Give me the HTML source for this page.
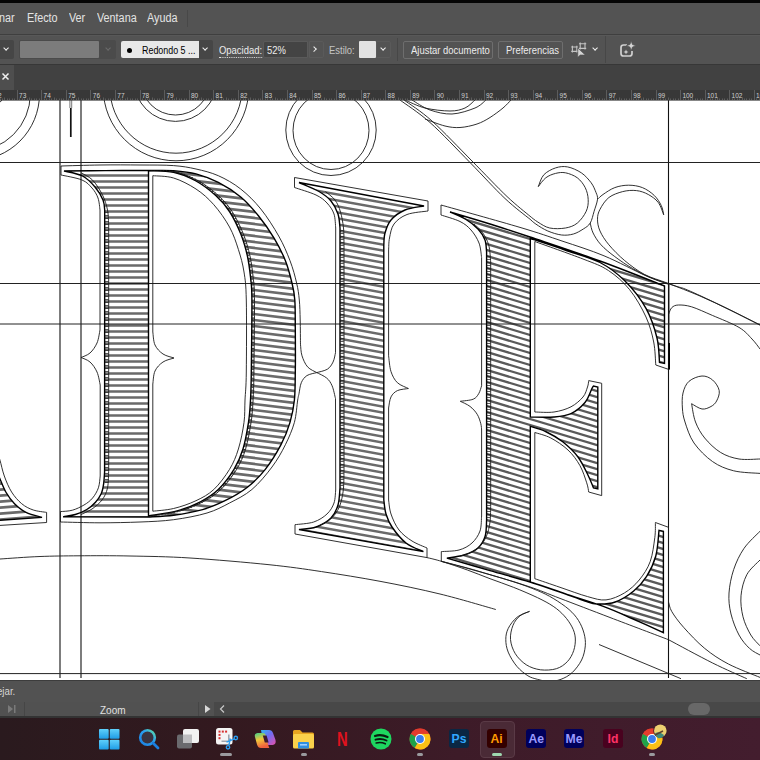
<!DOCTYPE html>
<html lang="es"><head><meta charset="utf-8"><title>Illustrator</title>
<style>
html,body{margin:0;padding:0;background:#535353;}
body{width:760px;height:760px;overflow:hidden;position:relative;font-family:"Liberation Sans",sans-serif;}
.a{position:absolute;}
.t{position:absolute;white-space:nowrap;line-height:1;}
.menu{font-size:12px;color:#e4e4e4;top:12.3px;transform:scaleX(0.9);transform-origin:0 0;}
.ctl{font-size:10.5px;color:#ececec;top:45.4px;transform:scaleX(0.9);transform-origin:0 0;}
.chev{position:absolute;margin:0.750px;width:3.200px;height:3.200px;border-right:1.900px solid #f0f0f0;border-bottom:1.900px solid #f0f0f0;transform:rotate(45deg);}
.btn{position:absolute;top:41px;height:16px;border:1px solid #6e6e6e;border-radius:2px;box-sizing:content-box;}
.tb{position:absolute;top:719px;}
</style></head><body>
<!-- top black strip -->
<div class="a" style="left:0;top:0;width:760px;height:3.5px;background:#050505"></div>
<!-- menu bar -->
<div class="a" style="left:0;top:3px;width:760px;height:30px;background:#535353"></div>
<div class="t menu" style="left:-1px">nar</div>
<div class="t menu" style="left:27px">Efecto</div>
<div class="t menu" style="left:69px">Ver</div>
<div class="t menu" style="left:97px">Ventana</div>
<div class="t menu" style="left:147px">Ayuda</div>
<div class="a" style="left:187px;top:10px;width:1px;height:17px;background:#484848"></div>
<!-- control bar -->
<div class="a" style="left:0;top:34px;width:760px;height:30px;background:#535353"></div>
<div class="a" style="left:0;top:33.800px;width:760px;height:1.100px;background:#3f3f3f"></div>
<div class="a" style="left:0;top:34.900px;width:760px;height:0.800px;background:#585858"></div>
<div class="a" style="left:0;top:40px;width:14px;height:19px;background:#464646;border-radius:0 2px 2px 0"></div>
<div class="chev" style="left:3px;top:45px"></div>
<div class="a" style="left:19px;top:40px;width:97px;height:19px;background:#4b4b4b;border-radius:2px"></div>
<div class="a" style="left:20px;top:41px;width:79px;height:17px;background:#7c7c7c;border-radius:1px"></div>
<div class="chev" style="left:105px;top:45px;border-color:#6b6b6b"></div>
<div class="a" style="left:121px;top:41px;width:78px;height:17px;background:#e8e8e8;border-radius:2px 0 0 2px"></div>
<div class="a" style="left:126.5px;top:47.5px;width:5px;height:5px;border-radius:50%;background:#000"></div>
<div class="t" style="left:142px;top:45.6px;font-size:10px;color:#000;transform:scaleX(0.89);transform-origin:0 0">Redondo 5 ...</div>
<div class="a" style="left:199px;top:40px;width:14px;height:19px;background:#464646;border-radius:0 2px 2px 0"></div>
<div class="chev" style="left:202.5px;top:45px"></div>
<div class="t ctl" style="left:219px;border-bottom:1px dotted #ddd;padding-bottom:1px;font-size:10.5px">Opacidad:</div>
<div class="a" style="left:263px;top:41px;width:45px;height:17px;background:#444;border:1px solid #5a5a5a;border-radius:2px 0 0 2px;box-sizing:border-box"></div>
<div class="t ctl" style="left:267px">52%</div>
<div class="a" style="left:309px;top:41px;width:15px;height:17px;border:1px solid #5a5a5a;box-sizing:border-box;border-radius:0 2px 2px 0"></div>
<div class="chev" style="left:311.5px;top:46.5px;transform:rotate(-45deg)"></div>
<div class="t ctl" style="left:329px;color:#c4c4c4">Estilo:</div>
<div class="a" style="left:359px;top:41px;width:16.500px;height:17px;background:#e2e2e2;border-radius:1px"></div>
<div class="a" style="left:376px;top:41px;width:15px;height:17px;border:1px solid #5a5a5a;box-sizing:border-box;border-radius:0 2px 2px 0"></div>
<div class="chev" style="left:380px;top:45px"></div>
<div class="a" style="left:397px;top:38px;width:1px;height:23px;background:#474747"></div>
<div class="btn" style="left:403px;width:88px"></div>
<div class="t ctl" style="left:411px">Ajustar documento</div>
<div class="btn" style="left:498px;width:63px"></div>
<div class="t ctl" style="left:506px">Preferencias</div>
<!-- selection icon -->
<svg class="a" style="left:570px;top:40px" width="20" height="20" viewBox="0 0 20 20"><g fill="none" stroke="#c4c4c4" stroke-width="1.100"><path d="M1.200 7H7.800M1.200 11.400H7.800M2.400 5.800V12.600M6.800 5.800V12.600"/><path d="M9 3.800H16.200M9 8.400H16.200M10.200 2.600V9.600M15 2.600V9.600"/></g><path d="M7.800 8L7.800 17.300L10.200 15L15.200 15Z" fill="#d4d4d4" stroke="#535353" stroke-width="0.600"/></svg>
<div class="chev" style="left:592px;top:45px"></div>
<div class="a" style="left:605px;top:36px;width:1px;height:27px;background:#474747"></div>
<svg class="a" style="left:618px;top:40px" width="20" height="20" viewBox="0 0 20 20"><path d="M9 5H5.5Q3 5 3 7.5V13.5Q3 16 5.5 16H11.500Q14 16 14 13.500V11" fill="none" stroke="#d0d0d0" stroke-width="1.7"/><path d="M13.200 0.800L14.500 4.500L18.200 5.800L14.500 7.100L13.200 10.800L11.900 7.100L8.200 5.800L11.900 4.500Z" fill="#d4d4d4" stroke="#535353" stroke-width="0.800"/><path d="M8 9.500L8.700 11.300L10.500 12L8.700 12.700L8 14.500L7.300 12.700L5.500 12L7.300 11.300Z" fill="#d0d0d0"/></svg>
<div class="a" style="left:0;top:63.800px;width:760px;height:1.500px;background:#373737"></div>
<!-- tab bar -->
<div class="a" style="left:0;top:65px;width:760px;height:25px;background:#414141"></div>
<div class="a" style="left:0;top:65px;width:14px;height:25px;background:#4e4e4e"></div>
<svg class="a" style="left:1px;top:72px" width="10" height="10" viewBox="0 0 10 10"><path d="M1.500 1.500L7.500 7.500M7.500 1.500L1.500 7.500" stroke="#f0f0f0" stroke-width="1.5"/></svg>
<svg width="760" height="11" viewBox="0 90 760 11" style="position:absolute;left:0;top:90px"><rect x="0" y="90" width="760" height="11" fill="#383838"/><path d="M-7.5 90V100M-4.5 98.5V100M-2.5 98.5V100M0.5 98.5V100M2.5 98.5V100M4.5 97.5V100M7.5 98.5V100M9.5 98.5V100M12.5 98.5V100M14.5 98.5V100M17.5 90V100M19.5 98.5V100M22.5 98.5V100M24.5 98.5V100M27.5 98.5V100M29.5 97.5V100M31.5 98.5V100M34.5 98.5V100M36.5 98.5V100M39.5 98.5V100M41.5 90V100M44.5 98.5V100M46.5 98.5V100M49.5 98.5V100M51.5 98.5V100M54.5 97.5V100M56.5 98.5V100M59.5 98.5V100M61.5 98.5V100M63.5 98.5V100M66.5 90V100M68.5 98.5V100M71.5 98.5V100M73.5 98.5V100M76.5 98.5V100M78.5 97.5V100M81.5 98.5V100M83.5 98.5V100M86.5 98.5V100M88.5 98.5V100M90.5 90V100M93.5 98.5V100M95.5 98.5V100M98.5 98.5V100M100.5 98.5V100M103.5 97.5V100M105.5 98.5V100M108.5 98.5V100M110.5 98.5V100M113.5 98.5V100M115.5 90V100M117.5 98.5V100M120.5 98.5V100M122.5 98.5V100M125.5 98.5V100M127.5 97.5V100M130.5 98.5V100M132.5 98.5V100M135.5 98.5V100M137.5 98.5V100M140.5 90V100M142.5 98.5V100M145.5 98.5V100M147.5 98.5V100M149.5 98.5V100M152.5 97.5V100M154.5 98.5V100M157.5 98.5V100M159.5 98.5V100M162.5 98.5V100M164.5 90V100M167.5 98.5V100M169.5 98.5V100M172.5 98.5V100M174.5 98.5V100M176.5 97.5V100M179.5 98.5V100M181.5 98.5V100M184.5 98.5V100M186.5 98.5V100M189.5 90V100M191.5 98.5V100M194.5 98.5V100M196.5 98.5V100M199.5 98.5V100M201.5 97.5V100M203.5 98.5V100M206.5 98.5V100M208.5 98.5V100M211.5 98.5V100M213.5 90V100M216.5 98.5V100M218.5 98.5V100M221.5 98.5V100M223.5 98.5V100M226.5 97.5V100M228.5 98.5V100M231.5 98.5V100M233.5 98.5V100M235.5 98.5V100M238.5 90V100M240.5 98.5V100M243.5 98.5V100M245.5 98.5V100M248.5 98.5V100M250.5 97.5V100M253.5 98.5V100M255.5 98.5V100M258.5 98.5V100M260.5 98.5V100M262.5 90V100M265.5 98.5V100M267.5 98.5V100M270.5 98.5V100M272.5 98.5V100M275.5 97.5V100M277.5 98.5V100M280.5 98.5V100M282.5 98.5V100M285.5 98.5V100M287.5 90V100M289.5 98.5V100M292.5 98.5V100M294.5 98.5V100M297.5 98.5V100M299.5 97.5V100M302.5 98.5V100M304.5 98.5V100M307.5 98.5V100M309.5 98.5V100M312.5 90V100M314.5 98.5V100M317.5 98.5V100M319.5 98.5V100M321.5 98.5V100M324.5 97.5V100M326.5 98.5V100M329.5 98.5V100M331.5 98.5V100M334.5 98.5V100M336.5 90V100M339.5 98.5V100M341.5 98.5V100M344.5 98.5V100M346.5 98.5V100M348.5 97.5V100M351.5 98.5V100M353.5 98.5V100M356.5 98.5V100M358.5 98.5V100M361.5 90V100M363.5 98.5V100M366.5 98.5V100M368.5 98.5V100M371.5 98.5V100M373.5 97.5V100M375.5 98.5V100M378.5 98.5V100M380.5 98.5V100M383.5 98.5V100M385.5 90V100M388.5 98.5V100M390.5 98.5V100M393.5 98.5V100M395.5 98.5V100M398.5 97.5V100M400.5 98.5V100M402.5 98.5V100M405.5 98.5V100M407.5 98.5V100M410.5 90V100M412.5 98.5V100M415.5 98.5V100M417.5 98.5V100M420.5 98.5V100M422.5 97.5V100M425.5 98.5V100M427.5 98.5V100M430.5 98.5V100M432.5 98.5V100M434.5 90V100M437.5 98.5V100M439.5 98.5V100M442.5 98.5V100M444.5 98.5V100M447.5 97.5V100M449.5 98.5V100M452.5 98.5V100M454.5 98.5V100M457.5 98.5V100M459.5 90V100M461.5 98.5V100M464.5 98.5V100M466.5 98.5V100M469.5 98.5V100M471.5 97.5V100M474.5 98.5V100M476.5 98.5V100M479.5 98.5V100M481.5 98.5V100M484.5 90V100M486.5 98.5V100M488.5 98.5V100M491.5 98.5V100M493.5 98.5V100M496.5 97.5V100M498.5 98.5V100M501.5 98.5V100M503.5 98.5V100M506.5 98.5V100M508.5 90V100M511.5 98.5V100M513.5 98.5V100M516.5 98.5V100M518.5 98.5V100M520.5 97.5V100M523.5 98.5V100M525.5 98.5V100M528.5 98.5V100M530.5 98.5V100M533.5 90V100M535.5 98.5V100M538.5 98.5V100M540.5 98.5V100M543.5 98.5V100M545.5 97.5V100M547.5 98.5V100M550.5 98.5V100M552.5 98.5V100M555.5 98.5V100M557.5 90V100M560.5 98.5V100M562.5 98.5V100M565.5 98.5V100M567.5 98.5V100M570.5 97.5V100M572.5 98.5V100M574.5 98.5V100M577.5 98.5V100M579.5 98.5V100M582.5 90V100M584.5 98.5V100M587.5 98.5V100M589.5 98.5V100M592.5 98.5V100M594.5 97.5V100M597.5 98.5V100M599.5 98.5V100M602.5 98.5V100M604.5 98.5V100M606.5 90V100M609.5 98.5V100M611.5 98.5V100M614.5 98.5V100M616.5 98.5V100M619.5 97.5V100M621.5 98.5V100M624.5 98.5V100M626.5 98.5V100M629.5 98.5V100M631.5 90V100M633.5 98.5V100M636.5 98.5V100M638.5 98.5V100M641.5 98.5V100M643.5 97.5V100M646.5 98.5V100M648.5 98.5V100M651.5 98.5V100M653.5 98.5V100M656.5 90V100M658.5 98.5V100M660.5 98.5V100M663.5 98.5V100M665.5 98.5V100M668.5 97.5V100M670.5 98.5V100M673.5 98.5V100M675.5 98.5V100M678.5 98.5V100M680.5 90V100M683.5 98.5V100M685.5 98.5V100M688.5 98.5V100M690.5 98.5V100M692.5 97.5V100M695.5 98.5V100M697.5 98.5V100M700.5 98.5V100M702.5 98.5V100M705.5 90V100M707.5 98.5V100M710.5 98.5V100M712.5 98.5V100M715.5 98.5V100M717.5 97.5V100M719.5 98.5V100M722.5 98.5V100M724.5 98.5V100M727.5 98.5V100M729.5 90V100M732.5 98.5V100M734.5 98.5V100M737.5 98.5V100M739.5 98.5V100M742.5 97.5V100M744.5 98.5V100M746.5 98.5V100M749.5 98.5V100M751.5 98.5V100M754.5 90V100M756.5 98.5V100M759.5 98.5V100M761.5 98.5V100M764.5 98.5V100M766.5 97.5V100M769.5 98.5V100M771.5 98.5V100M774.5 98.5V100M776.5 98.5V100M778.5 90V100M781.5 98.5V100M783.5 98.5V100M786.5 98.5V100M788.5 98.5V100M791.5 97.5V100M793.5 98.5V100M796.5 98.5V100M798.5 98.5V100M801.5 98.5V100" stroke="#7a7a7a" stroke-width="1" opacity="0.55"/><g font-family="Liberation Sans, sans-serif" font-size="6.5" fill="#cfcfcf"><text x="-5.5" y="98">72</text><text x="19.1" y="98">73</text><text x="43.6" y="98">74</text><text x="68.2" y="98">75</text><text x="92.8" y="98">76</text><text x="117.3" y="98">77</text><text x="141.9" y="98">78</text><text x="166.5" y="98">79</text><text x="191.0" y="98">80</text><text x="215.6" y="98">81</text><text x="240.2" y="98">82</text><text x="264.8" y="98">83</text><text x="289.3" y="98">84</text><text x="313.9" y="98">85</text><text x="338.5" y="98">86</text><text x="363.0" y="98">87</text><text x="387.6" y="98">88</text><text x="412.2" y="98">89</text><text x="436.7" y="98">90</text><text x="461.3" y="98">91</text><text x="485.9" y="98">92</text><text x="510.4" y="98">93</text><text x="535.0" y="98">94</text><text x="559.6" y="98">95</text><text x="584.2" y="98">96</text><text x="608.7" y="98">97</text><text x="633.3" y="98">98</text><text x="657.9" y="98">99</text><text x="682.4" y="98">100</text><text x="707.0" y="98">101</text><text x="731.6" y="98">102</text><text x="756.1" y="98">103</text><text x="780.7" y="98">104</text></g></svg><svg width="760" height="580" viewBox="0 100 760 580" style="position:absolute;left:0;top:100px"><defs><clipPath id="cDs"><rect x="104" y="160" width="45" height="360"/></clipPath><clipPath id="cD"><path clip-rule="evenodd" d="M64.0 171.0C70.8 170.9 90.8 170.7 105.0 170.6C119.2 170.5 137.6 170.5 149.0 170.5C160.4 170.5 165.8 170.1 173.6 170.7C181.4 171.3 188.6 171.9 196.0 173.9C203.4 175.9 210.9 178.6 218.3 182.4C225.8 186.2 234.0 191.4 240.7 197.0C247.4 202.6 253.0 209.1 258.6 216.0C264.2 222.9 269.7 230.9 274.2 238.3C278.7 245.8 282.4 253.2 285.4 260.7C288.4 268.1 290.4 276.4 292.0 283.0C293.6 289.6 294.2 292.2 294.8 300.0C295.4 307.8 295.2 318.0 295.3 330.0C295.4 342.0 295.5 360.3 295.3 372.0C295.1 383.7 295.3 391.6 294.4 400.0C293.5 408.4 292.2 414.9 290.0 422.4C287.8 429.8 285.1 436.9 281.0 444.7C276.9 452.5 270.9 462.3 265.3 469.4C259.7 476.5 254.1 482.0 247.4 487.2C240.7 492.4 232.5 497.0 225.0 500.7C217.5 504.4 211.2 507.2 202.6 509.6C194.0 512.0 182.7 514.0 173.6 515.2C164.5 516.4 152.3 516.7 148.0 517.0L148.0 517.0L63.7 516.9L63.7 516.7C65.6 516.3 71.5 515.7 75.3 514.5C79.1 513.3 83.4 511.6 86.8 509.5C90.2 507.4 93.1 504.9 95.5 502.2C97.9 499.5 99.9 496.6 101.3 493.5C102.7 490.4 103.2 487.0 103.7 483.4C104.2 479.8 104.4 473.9 104.6 472.0L104.6 472.0L104.7 210.0L104.7 210.0C104.4 208.3 104.6 203.8 103.0 200.0C101.4 196.2 98.4 191.0 95.0 187.0C91.6 183.0 87.7 178.7 82.5 176.0C77.3 173.3 67.1 171.8 64.0 171.0ZM148.5 516.0C153.4 515.1 169.3 513.1 178.0 510.7C186.7 508.3 193.7 505.3 200.4 501.8C207.1 498.3 212.7 494.9 218.3 489.5C223.9 484.1 229.9 476.1 234.0 469.4C238.1 462.6 240.6 456.8 243.0 449.0C245.4 441.2 247.2 430.6 248.5 422.4C249.8 414.2 250.0 408.4 250.5 400.0C251.0 391.6 251.1 388.7 251.3 372.0C251.5 355.3 252.0 315.6 251.9 300.0C251.8 284.4 251.4 285.9 250.7 278.6C249.9 271.3 249.1 263.5 247.4 256.0C245.7 248.5 243.7 241.2 240.7 233.8C237.7 226.4 233.6 217.8 229.5 211.5C225.4 205.2 221.6 200.9 216.0 195.8C210.4 190.7 203.1 184.9 196.0 181.0C188.9 177.1 181.5 174.0 173.6 172.3C165.7 170.6 152.7 171.0 148.5 170.7L148.5 170.7L148.5 516.0Z"/></clipPath><clipPath id="cDstem" clip-path="url(#cD)"><rect x="0" y="160" width="149" height="370"/></clipPath><clipPath id="cDbowl" clip-path="url(#cD)"><rect x="149" y="160" width="160" height="370"/></clipPath><clipPath id="cI"><path d="M299.0 182.5L424.0 206.0L424.0 206.0C420.8 206.7 410.5 207.7 405.0 210.0C399.5 212.3 394.3 216.2 391.0 220.0C387.7 223.8 386.2 228.8 385.0 233.0C383.8 237.2 384.0 243.0 383.8 245.0L383.8 245.0L383.8 500.0L383.8 500.0C384.2 502.3 384.6 509.5 386.0 514.0C387.4 518.5 388.7 522.2 392.0 527.0C395.3 531.8 400.8 538.9 406.0 543.0C411.2 547.1 420.5 550.2 423.4 551.6L423.4 551.6L299.0 529.5L299.0 529.5C301.8 529.1 310.7 528.9 316.0 527.0C321.3 525.1 327.3 521.7 331.0 518.0C334.7 514.3 336.5 510.0 338.0 505.0C339.5 500.0 339.7 490.8 340.0 488.0L340.0 488.0L340.0 228.0L340.0 228.0C339.7 225.7 339.5 218.5 338.0 214.0C336.5 209.5 334.2 204.8 331.0 201.0C327.8 197.2 324.3 194.6 319.0 191.5C313.7 188.4 302.3 184.0 299.0 182.5Z"/></clipPath><clipPath id="cE"><path d="M450.0 212.0C456.7 214.0 476.7 219.8 490.0 224.0C503.3 228.2 511.7 230.8 530.0 237.0C548.3 243.2 577.6 252.8 600.0 261.0C622.4 269.2 653.8 281.8 664.5 286.0L664.5 286.0L664.5 363.5L664.5 363.5L659.5 362.5L659.5 362.5C659.1 358.4 659.2 347.0 657.0 338.0C654.8 329.0 651.3 317.9 646.0 308.4C640.7 298.9 632.7 288.6 625.0 281.0C617.3 273.4 610.0 267.7 600.0 262.5C590.0 257.3 576.6 254.0 565.0 250.0C553.4 246.0 536.1 240.4 530.3 238.5L530.3 238.5L530.3 417.0L530.3 417.0C534.2 417.0 547.2 417.6 554.0 417.0C560.8 416.4 565.8 416.0 571.0 413.6C576.2 411.2 581.5 406.6 585.0 402.5C588.5 398.4 590.4 391.6 591.8 388.8C593.2 386.1 593.2 386.5 593.5 386.0L593.5 386.0L597.8 387.0L597.8 387.0L597.8 488.8L597.8 488.8L593.5 488.0L593.5 488.0C592.6 486.0 591.0 481.2 588.4 476.0C585.8 470.8 582.3 462.7 578.0 457.0C573.7 451.3 568.1 446.1 562.7 441.8C557.3 437.6 551.0 434.1 545.6 431.5C540.2 428.9 532.8 427.2 530.3 426.4L530.3 426.4L530.3 581.0L530.3 581.9C535.2 583.6 550.9 588.8 560.0 592.0C569.1 595.2 578.9 599.0 585.0 601.0C591.1 603.0 591.8 603.8 596.8 604.0C601.8 604.2 609.1 604.2 615.2 602.0C621.4 599.8 628.5 595.3 633.7 591.0C638.9 586.7 642.9 582.1 646.6 576.3C650.3 570.5 653.7 563.7 655.8 556.0C657.9 548.3 658.5 534.6 659.0 530.3L659.0 530.3L663.4 531.3L663.4 531.3L663.4 632.6L663.4 632.6C658.2 630.2 642.2 623.0 632.0 618.5C621.8 614.0 614.0 610.3 602.0 605.9C590.0 601.5 572.0 596.2 560.0 592.2C548.0 588.2 541.7 585.6 530.0 582.0C518.3 578.4 503.9 574.6 490.0 570.6C476.1 566.6 454.1 560.3 446.9 558.2L446.9 558.2C449.8 557.7 458.8 556.7 464.0 555.0C469.2 553.3 474.5 551.2 478.0 548.0C481.5 544.8 483.8 540.7 485.2 536.0C486.6 531.3 486.4 522.7 486.6 520.0L486.6 520.0L486.6 252.0L486.6 252.0C486.3 250.0 486.4 243.8 485.0 240.0C483.6 236.2 481.2 232.4 478.0 229.0C474.8 225.6 470.7 222.3 466.0 219.5C461.3 216.7 452.7 213.2 450.0 212.0Z"/></clipPath><clipPath id="cA"><path d="M-3.0 472.0C-2.5 473.2 -1.5 475.7 0.0 479.0C1.5 482.3 3.4 487.9 5.8 492.0C8.2 496.1 11.1 500.3 14.5 503.7C17.9 507.1 21.4 510.1 26.0 512.4C30.6 514.7 39.3 516.6 42.0 517.4L42.0 517.4L-3.0 520.5Z"/></clipPath></defs><rect x="0" y="100" width="760" height="580" fill="#fff"/><g clip-path="url(#cDstem)" stroke="#6a6a6a" stroke-width="2.7"><path d="M60.0 163.5L150.0 163.5M60.0 169.5L150.0 169.5M60.0 175.5L150.0 175.5M60.0 181.5L150.0 181.5M60.0 187.5L150.0 187.5M60.0 193.5L150.0 193.5M60.0 199.5L150.0 199.5M60.0 205.5L150.0 205.5M60.0 211.5L150.0 211.5M60.0 217.5L150.0 217.5M60.0 223.5L150.0 223.5M60.0 229.5L150.0 229.5M60.0 235.5L150.0 235.5M60.0 241.5L150.0 241.5M60.0 247.5L150.0 247.5M60.0 253.5L150.0 253.5M60.0 259.5L150.0 259.5M60.0 265.5L150.0 265.5M60.0 271.5L150.0 271.5M60.0 277.5L150.0 277.5M60.0 283.5L150.0 283.5M60.0 289.5L150.0 289.5M60.0 295.5L150.0 295.5M60.0 301.5L150.0 301.5M60.0 307.5L150.0 307.5M60.0 313.5L150.0 313.5M60.0 319.5L150.0 319.5M60.0 325.5L150.0 325.5M60.0 331.5L150.0 331.5M60.0 337.5L150.0 337.5M60.0 343.5L150.0 343.5M60.0 349.5L150.0 349.5M60.0 355.5L150.0 355.5M60.0 361.5L150.0 361.5M60.0 367.5L150.0 367.5M60.0 373.5L150.0 373.5M60.0 379.5L150.0 379.5M60.0 385.5L150.0 385.5M60.0 391.5L150.0 391.5M60.0 397.5L150.0 397.5M60.0 403.5L150.0 403.5M60.0 409.5L150.0 409.5M60.0 415.5L150.0 415.5M60.0 421.5L150.0 421.5M60.0 427.5L150.0 427.5M60.0 433.5L150.0 433.5M60.0 439.5L150.0 439.5M60.0 445.5L150.0 445.5M60.0 451.5L150.0 451.5M60.0 457.5L150.0 457.5M60.0 463.5L150.0 463.5M60.0 469.5L150.0 469.5M60.0 475.5L150.0 475.5M60.0 481.5L150.0 481.5M60.0 487.5L150.0 487.5M60.0 493.5L150.0 493.5M60.0 499.5L150.0 499.5M60.0 505.5L150.0 505.5M60.0 511.5L150.0 511.5M60.0 517.5L150.0 517.5M60.0 523.5L150.0 523.5"/></g><g clip-path="url(#cDbowl)" stroke="#6a6a6a" stroke-width="2.7"><path d="M148.0 145.3L300.0 163.5M148.0 151.3L300.0 169.5M148.0 157.3L300.0 175.5M148.0 163.3L300.0 181.5M148.0 169.3L300.0 187.5M148.0 175.3L300.0 193.5M148.0 181.3L300.0 199.5M148.0 187.3L300.0 205.5M148.0 193.3L300.0 211.5M148.0 199.3L300.0 217.5M148.0 205.3L300.0 223.5M148.0 211.3L300.0 229.5M148.0 217.3L300.0 235.5M148.0 223.3L300.0 241.5M148.0 229.3L300.0 247.5M148.0 235.3L300.0 253.5M148.0 241.3L300.0 259.5M148.0 247.3L300.0 265.5M148.0 253.3L300.0 271.5M148.0 259.3L300.0 277.5M148.0 265.3L300.0 283.5M148.0 271.3L300.0 289.5M148.0 277.3L300.0 295.5M148.0 283.3L300.0 301.5M148.0 289.3L300.0 307.5M148.0 295.3L300.0 313.5M148.0 301.3L300.0 319.5M148.0 307.3L300.0 325.5M148.0 313.3L300.0 331.5M148.0 319.3L300.0 337.5M148.0 325.3L300.0 343.5M148.0 331.3L300.0 349.5M148.0 337.3L300.0 355.5M148.0 343.3L300.0 361.5M148.0 349.3L300.0 367.5M148.0 355.3L300.0 373.5M148.0 361.3L300.0 379.5M148.0 367.3L300.0 385.5M148.0 373.3L300.0 391.5M148.0 379.3L300.0 397.5M148.0 385.3L300.0 403.5M148.0 391.3L300.0 409.5M148.0 397.3L300.0 415.5M148.0 403.3L300.0 421.5M148.0 409.3L300.0 427.5M148.0 415.3L300.0 433.5M148.0 421.3L300.0 439.5M148.0 427.3L300.0 445.5M148.0 433.3L300.0 451.5M148.0 439.3L300.0 457.5M148.0 445.3L300.0 463.5M148.0 451.3L300.0 469.5M148.0 457.3L300.0 475.5M148.0 463.3L300.0 481.5M148.0 469.3L300.0 487.5M148.0 475.3L300.0 493.5M148.0 481.3L300.0 499.5M148.0 487.3L300.0 505.5M148.0 493.3L300.0 511.5M148.0 499.3L300.0 517.5M148.0 505.3L300.0 523.5M148.0 511.3L300.0 529.5M148.0 517.3L300.0 535.5M148.0 523.3L300.0 541.5"/></g><g clip-path="url(#cI)" stroke="#6a6a6a" stroke-width="2.5"><path d="M295.0 144.7L430.0 169.0M295.0 150.7L430.0 175.0M295.0 156.7L430.0 181.0M295.0 162.7L430.0 187.0M295.0 168.7L430.0 193.0M295.0 174.7L430.0 199.0M295.0 180.7L430.0 205.0M295.0 186.7L430.0 211.0M295.0 192.7L430.0 217.0M295.0 198.7L430.0 223.0M295.0 204.7L430.0 229.0M295.0 210.7L430.0 235.0M295.0 216.7L430.0 241.0M295.0 222.7L430.0 247.0M295.0 228.7L430.0 253.0M295.0 234.7L430.0 259.0M295.0 240.7L430.0 265.0M295.0 246.7L430.0 271.0M295.0 252.7L430.0 277.0M295.0 258.7L430.0 283.0M295.0 264.7L430.0 289.0M295.0 270.7L430.0 295.0M295.0 276.7L430.0 301.0M295.0 282.7L430.0 307.0M295.0 288.7L430.0 313.0M295.0 294.7L430.0 319.0M295.0 300.7L430.0 325.0M295.0 306.7L430.0 331.0M295.0 312.7L430.0 337.0M295.0 318.7L430.0 343.0M295.0 324.7L430.0 349.0M295.0 330.7L430.0 355.0M295.0 336.7L430.0 361.0M295.0 342.7L430.0 367.0M295.0 348.7L430.0 373.0M295.0 354.7L430.0 379.0M295.0 360.7L430.0 385.0M295.0 366.7L430.0 391.0M295.0 372.7L430.0 397.0M295.0 378.7L430.0 403.0M295.0 384.7L430.0 409.0M295.0 390.7L430.0 415.0M295.0 396.7L430.0 421.0M295.0 402.7L430.0 427.0M295.0 408.7L430.0 433.0M295.0 414.7L430.0 439.0M295.0 420.7L430.0 445.0M295.0 426.7L430.0 451.0M295.0 432.7L430.0 457.0M295.0 438.7L430.0 463.0M295.0 444.7L430.0 469.0M295.0 450.7L430.0 475.0M295.0 456.7L430.0 481.0M295.0 462.7L430.0 487.0M295.0 468.7L430.0 493.0M295.0 474.7L430.0 499.0M295.0 480.7L430.0 505.0M295.0 486.7L430.0 511.0M295.0 492.7L430.0 517.0M295.0 498.7L430.0 523.0M295.0 504.7L430.0 529.0M295.0 510.7L430.0 535.0M295.0 516.7L430.0 541.0M295.0 522.7L430.0 547.0M295.0 528.7L430.0 553.0M295.0 534.7L430.0 559.0M295.0 540.7L430.0 565.0M295.0 546.7L430.0 571.0M295.0 552.7L430.0 577.0M295.0 558.7L430.0 583.0M295.0 564.7L430.0 589.0"/></g><g clip-path="url(#cE)" stroke="#5a5a5a" stroke-width="2.3"><path d="M440.0 128.0L670.0 197.0M440.0 134.0L670.0 203.0M440.0 140.0L670.0 209.0M440.0 146.0L670.0 215.0M440.0 152.0L670.0 221.0M440.0 158.0L670.0 227.0M440.0 164.0L670.0 233.0M440.0 170.0L670.0 239.0M440.0 176.0L670.0 245.0M440.0 182.0L670.0 251.0M440.0 188.0L670.0 257.0M440.0 194.0L670.0 263.0M440.0 200.0L670.0 269.0M440.0 206.0L670.0 275.0M440.0 212.0L670.0 281.0M440.0 218.0L670.0 287.0M440.0 224.0L670.0 293.0M440.0 230.0L670.0 299.0M440.0 236.0L670.0 305.0M440.0 242.0L670.0 311.0M440.0 248.0L670.0 317.0M440.0 254.0L670.0 323.0M440.0 260.0L670.0 329.0M440.0 266.0L670.0 335.0M440.0 272.0L670.0 341.0M440.0 278.0L670.0 347.0M440.0 284.0L670.0 353.0M440.0 290.0L670.0 359.0M440.0 296.0L670.0 365.0M440.0 302.0L670.0 371.0M440.0 308.0L670.0 377.0M440.0 314.0L670.0 383.0M440.0 320.0L670.0 389.0M440.0 326.0L670.0 395.0M440.0 332.0L670.0 401.0M440.0 338.0L670.0 407.0M440.0 344.0L670.0 413.0M440.0 350.0L670.0 419.0M440.0 356.0L670.0 425.0M440.0 362.0L670.0 431.0M440.0 368.0L670.0 437.0M440.0 374.0L670.0 443.0M440.0 380.0L670.0 449.0M440.0 386.0L670.0 455.0M440.0 392.0L670.0 461.0M440.0 398.0L670.0 467.0M440.0 404.0L670.0 473.0M440.0 410.0L670.0 479.0M440.0 416.0L670.0 485.0M440.0 422.0L670.0 491.0M440.0 428.0L670.0 497.0M440.0 434.0L670.0 503.0M440.0 440.0L670.0 509.0M440.0 446.0L670.0 515.0M440.0 452.0L670.0 521.0M440.0 458.0L670.0 527.0M440.0 464.0L670.0 533.0M440.0 470.0L670.0 539.0M440.0 476.0L670.0 545.0M440.0 482.0L670.0 551.0M440.0 488.0L670.0 557.0M440.0 494.0L670.0 563.0M440.0 500.0L670.0 569.0M440.0 506.0L670.0 575.0M440.0 512.0L670.0 581.0M440.0 518.0L670.0 587.0M440.0 524.0L670.0 593.0M440.0 530.0L670.0 599.0M440.0 536.0L670.0 605.0M440.0 542.0L670.0 611.0M440.0 548.0L670.0 617.0M440.0 554.0L670.0 623.0M440.0 560.0L670.0 629.0M440.0 566.0L670.0 635.0M440.0 572.0L670.0 641.0M440.0 578.0L670.0 647.0M440.0 584.0L670.0 653.0M440.0 590.0L670.0 659.0M440.0 596.0L670.0 665.0M440.0 602.0L670.0 671.0M440.0 608.0L670.0 677.0M440.0 614.0L670.0 683.0M440.0 620.0L670.0 689.0M440.0 626.0L670.0 695.0M440.0 632.0L670.0 701.0M440.0 638.0L670.0 707.0M440.0 644.0L670.0 713.0"/></g><g clip-path="url(#cA)" stroke="#6a6a6a" stroke-width="2.7"><path d="M-2.0 459.8L50.0 455.7M-2.0 465.8L50.0 461.7M-2.0 471.8L50.0 467.7M-2.0 477.8L50.0 473.7M-2.0 483.8L50.0 479.7M-2.0 489.8L50.0 485.7M-2.0 495.8L50.0 491.7M-2.0 501.8L50.0 497.7M-2.0 507.8L50.0 503.7M-2.0 513.8L50.0 509.7M-2.0 519.8L50.0 515.7M-2.0 525.8L50.0 521.7"/></g><path d="M60.0 100V678" stroke="#111" stroke-width="1.1"/><path d="M81.0 100V678" stroke="#111" stroke-width="1.1"/><path d="M668.5 100V678" stroke="#111" stroke-width="1.1"/><path d="M0 162.5H760" stroke="#222" stroke-width="1"/><path d="M0 283.5H760" stroke="#222" stroke-width="1"/><path d="M0 324.0H760" stroke="#222" stroke-width="1"/><path d="M0 673.6H760" stroke="#222" stroke-width="1"/><path d="M70.8 108V137" stroke="#111" stroke-width="1.7"/><path d="M69.9 100V108M71.7 100V108" stroke="#555" stroke-width="0.8"/><path d="M61.0 166.0C67.5 165.8 86.8 165.2 100.0 165.0C113.2 164.8 127.7 164.9 140.0 165.0C152.3 165.1 164.3 164.9 173.6 165.6C182.9 166.3 188.6 167.3 196.0 169.0C203.4 170.7 210.9 172.4 218.3 175.7C225.8 179.0 233.6 183.4 240.7 189.0C247.8 194.6 254.5 201.2 260.8 209.0C267.1 216.8 273.8 227.4 278.7 236.0C283.6 244.6 287.0 252.9 290.0 260.7C293.0 268.5 295.1 276.4 296.6 283.0C298.2 289.6 298.7 293.8 299.3 300.0C299.9 306.2 300.0 312.5 300.2 320.0C300.4 327.5 300.4 340.7 300.5 344.8L300.5 344.8C300.8 346.6 300.8 352.1 302.0 355.8C303.2 359.5 305.1 364.1 307.6 366.9C310.1 369.7 315.3 371.7 316.8 372.6L316.8 372.6C315.1 373.1 309.5 373.9 306.9 375.6C304.3 377.3 302.6 379.7 301.3 382.7C300.0 385.7 299.6 390.8 299.0 393.7C298.4 396.6 298.5 395.2 297.7 400.0C296.9 404.8 296.4 414.9 294.4 422.4C292.3 429.8 289.1 437.3 285.4 444.7C281.7 452.1 277.6 459.5 272.0 467.0C266.4 474.5 259.0 483.5 251.9 489.5C244.8 495.5 237.0 499.1 229.5 503.0C222.0 506.9 216.3 510.2 207.0 513.0C197.7 515.8 184.8 518.2 173.6 519.7C162.4 521.2 152.3 521.5 140.0 522.0C127.7 522.5 113.2 522.8 100.0 522.8C86.8 522.8 67.1 522.1 60.5 522.0L60.5 522.0L60.5 511.5L60.5 511.6C62.5 511.4 68.5 511.3 72.4 510.2C76.3 509.1 80.6 507.0 84.0 505.0C87.4 503.0 90.2 500.9 92.6 498.0C95.0 495.1 97.1 491.5 98.4 487.8C99.7 484.1 99.9 478.0 100.2 476.0L100.2 476.0L100.2 385.0L100.2 385.0C99.7 382.8 98.7 375.8 97.0 372.0C95.3 368.2 92.7 364.4 90.0 362.0C87.3 359.6 82.5 358.2 81.0 357.5L81.0 357.5C82.5 356.8 87.3 355.4 90.0 353.0C92.7 350.6 95.3 346.8 97.0 343.0C98.7 339.2 99.5 332.2 100.0 330.0L100.0 330.0L100.0 210.0L100.0 210.0C99.7 208.0 99.3 201.7 98.0 198.0C96.7 194.3 94.7 191.0 92.0 188.0C89.3 185.0 87.2 182.2 82.0 180.0C76.8 177.8 64.5 175.8 61.0 175.0L61.0 175.0L61.0 166.0Z" fill="none" stroke="#1a1a1a" stroke-width="0.9"/><path d="M152.8 175.7C156.3 176.1 166.4 175.8 173.6 178.0C180.8 180.2 189.3 184.6 196.0 189.0C202.7 193.4 208.2 198.4 213.8 204.7C219.4 211.0 225.4 219.5 229.5 227.0C233.6 234.5 236.0 242.0 238.4 249.5C240.8 257.0 242.7 263.6 244.0 272.0C245.3 280.4 245.9 283.3 246.3 300.0C246.7 316.7 246.5 355.3 246.3 372.0C246.1 388.7 245.4 391.6 245.0 400.0C244.6 408.4 245.1 414.2 244.0 422.4C242.9 430.6 240.8 441.2 238.4 449.0C236.0 456.8 233.6 462.6 229.5 469.4C225.4 476.1 219.4 484.3 213.8 489.5C208.2 494.7 202.7 497.5 196.0 500.7C189.3 503.9 180.8 506.8 173.6 508.5C166.4 510.2 156.3 510.8 152.8 511.2L152.8 511.2L152.8 384.0L152.8 384.0C153.2 381.8 153.3 374.7 155.0 371.0C156.7 367.3 159.8 364.2 163.0 362.0C166.2 359.8 172.2 358.7 174.0 358.0L174.0 358.0C172.2 357.3 166.2 356.2 163.0 354.0C159.8 351.8 156.7 348.7 155.0 345.0C153.3 341.3 153.2 334.2 152.8 332.0L152.8 332.0L152.8 175.7Z" fill="none" stroke="#1a1a1a" stroke-width="0.9"/><path d="M294.5 177.5L428.0 201.0L428.0 201.0L428.0 211.0L428.0 211.0C424.5 211.6 412.7 212.3 407.0 214.5C401.3 216.7 396.9 220.1 394.0 224.0C391.1 227.9 390.4 233.7 389.5 238.0C388.6 242.3 388.8 248.0 388.6 250.0L388.6 250.0L388.6 355.8L388.6 355.8C389.0 358.4 389.5 367.1 391.0 371.6C392.5 376.1 394.5 379.9 397.4 382.7C400.3 385.5 406.6 387.5 408.4 388.5L408.4 388.5C406.6 388.9 400.3 389.2 397.4 390.6C394.5 392.0 392.5 394.0 391.0 396.9C389.5 399.8 389.0 406.1 388.6 408.0L388.6 408.0L388.6 500.0L388.6 500.0C389.0 502.3 389.3 509.0 391.0 514.0C392.7 519.0 395.5 525.5 399.0 530.0C402.5 534.5 407.3 538.0 412.0 541.0C416.7 544.0 424.5 546.8 427.0 548.0L427.0 548.0L427.0 557.6L427.0 557.6L295.0 534.0L295.0 534.0L295.0 524.7L295.0 524.7C298.1 524.2 308.4 523.8 313.7 522.0C319.0 520.2 323.6 517.2 327.0 514.0C330.4 510.8 332.6 507.0 334.0 503.0C335.4 499.0 335.4 492.2 335.7 490.0L335.7 490.0L335.5 398.5L335.5 398.5C334.9 396.4 333.6 389.2 332.1 385.8C330.6 382.4 329.2 380.2 326.6 378.0C324.1 375.8 318.4 373.5 316.8 372.6L316.8 372.6C318.6 372.0 324.7 370.9 327.4 369.2C330.1 367.4 331.6 364.9 333.0 362.1C334.4 359.4 335.1 354.3 335.5 352.7L335.5 352.7L335.7 228.0L335.7 228.0C335.4 225.7 335.4 218.2 334.0 214.0C332.6 209.8 330.0 206.2 327.0 203.0C324.0 199.8 321.4 197.6 316.0 195.0C310.6 192.4 298.1 188.8 294.5 187.5L294.5 187.5L294.5 177.5Z" fill="none" stroke="#1a1a1a" stroke-width="0.9"/><path d="M441.0 205.0C454.2 208.7 499.8 221.4 520.0 227.4C540.2 233.4 548.0 236.3 562.0 241.0C576.0 245.7 590.0 250.0 604.0 255.8C618.0 261.6 635.2 271.0 646.0 275.8C656.8 280.6 665.2 283.1 669.0 284.5L669.0 284.5L669.0 369.5L669.0 369.5L655.8 365.0L655.8 365.0C655.4 361.2 655.3 350.0 653.7 342.0C652.1 334.0 650.0 325.8 646.0 317.0C642.0 308.2 635.8 297.2 629.5 289.5C623.2 281.8 616.1 275.6 608.4 270.5C600.6 265.4 595.3 263.8 583.0 259.0C570.7 254.2 542.8 244.4 534.8 241.5L534.8 241.5L534.8 412.0L534.8 412.0C538.0 412.0 548.0 412.9 554.0 412.0C560.0 411.1 566.2 409.3 571.0 406.8C575.8 404.3 580.2 400.3 583.0 397.0C585.8 393.7 586.5 389.7 587.5 387.0C588.5 384.3 588.5 381.7 588.7 380.6L588.7 380.6L601.7 383.3L601.7 383.3L601.7 495.6L601.7 495.6L588.7 492.0L588.7 492.0C588.4 490.5 588.2 487.2 586.7 482.8C585.2 478.4 583.1 471.2 580.0 465.7C576.9 460.2 572.9 454.6 568.0 450.0C563.1 445.4 556.3 440.9 550.8 438.0C545.3 435.1 537.5 433.4 534.8 432.5L534.8 432.5L534.8 578.7L534.8 578.7C539.0 580.1 551.2 584.3 560.0 587.3C568.8 590.3 579.9 594.5 587.6 596.6C595.3 598.7 599.9 600.5 606.0 599.9C612.1 599.3 619.0 596.2 624.5 592.9C630.0 589.6 634.9 585.2 639.2 580.0C643.5 574.8 647.6 568.7 650.2 561.6C652.8 554.5 653.9 544.1 654.8 537.6C655.7 531.1 655.3 525.0 655.4 522.5L655.4 522.5L668.5 527.3L668.5 527.3L668.5 639.7L668.5 639.7C658.8 636.0 628.1 624.4 610.0 617.5C591.9 610.6 573.5 603.5 560.0 598.4C546.5 593.2 540.7 590.5 529.0 586.6C517.3 582.7 504.6 578.9 490.0 574.7C475.4 570.5 449.4 563.5 441.3 561.3L441.3 561.3L441.3 551.6L441.3 551.6C444.2 551.3 453.9 551.4 459.0 550.0C464.1 548.6 468.5 546.2 472.0 543.0C475.5 539.8 478.4 535.5 480.0 531.0C481.6 526.5 481.3 518.5 481.6 516.0L481.6 516.0L481.6 430.0L481.6 430.0C481.5 428.9 481.5 426.3 480.8 423.7C480.1 421.1 479.0 417.2 477.2 414.3C475.4 411.4 472.8 408.6 470.0 406.4C467.2 404.2 461.9 402.1 460.3 401.3L460.3 401.3C462.4 400.9 470.1 400.5 473.2 399.2C476.3 397.9 477.3 395.9 478.7 393.7C480.1 391.5 481.1 387.1 481.6 385.8L481.6 385.8L481.6 257.5L481.6 257.5C481.2 255.1 480.8 247.6 479.0 243.0C477.2 238.4 474.2 233.6 471.0 230.0C467.8 226.4 465.0 224.0 460.0 221.5C455.0 219.0 444.2 216.1 441.0 215.0L441.0 215.0L441.0 205.0Z" fill="none" stroke="#1a1a1a" stroke-width="0.9"/><path d="M-3.0 452.0C-2.5 453.4 -1.2 456.3 0.0 460.3C1.2 464.3 2.4 470.7 4.3 476.0C6.2 481.3 8.7 487.4 11.6 492.0C14.5 496.6 18.1 500.7 21.7 503.7C25.3 506.7 29.1 508.6 33.3 510.0C37.4 511.4 44.4 512.0 46.6 512.4L46.6 512.4L46.6 522.5L46.6 522.5L-3.0 525.6" fill="none" stroke="#1a1a1a" stroke-width="0.9"/><path d="M64.0 171.0C70.8 170.9 90.8 170.7 105.0 170.6C119.2 170.5 137.6 170.5 149.0 170.5C160.4 170.5 165.8 170.1 173.6 170.7C181.4 171.3 188.6 171.9 196.0 173.9C203.4 175.9 210.9 178.6 218.3 182.4C225.8 186.2 234.0 191.4 240.7 197.0C247.4 202.6 253.0 209.1 258.6 216.0C264.2 222.9 269.7 230.9 274.2 238.3C278.7 245.8 282.4 253.2 285.4 260.7C288.4 268.1 290.4 276.4 292.0 283.0C293.6 289.6 294.2 292.2 294.8 300.0C295.4 307.8 295.2 318.0 295.3 330.0C295.4 342.0 295.5 360.3 295.3 372.0C295.1 383.7 295.3 391.6 294.4 400.0C293.5 408.4 292.2 414.9 290.0 422.4C287.8 429.8 285.1 436.9 281.0 444.7C276.9 452.5 270.9 462.3 265.3 469.4C259.7 476.5 254.1 482.0 247.4 487.2C240.7 492.4 232.5 497.0 225.0 500.7C217.5 504.4 211.2 507.2 202.6 509.6C194.0 512.0 182.7 514.0 173.6 515.2C164.5 516.4 152.3 516.7 148.0 517.0L148.0 517.0L63.7 516.9L63.7 516.7C65.6 516.3 71.5 515.7 75.3 514.5C79.1 513.3 83.4 511.6 86.8 509.5C90.2 507.4 93.1 504.9 95.5 502.2C97.9 499.5 99.9 496.6 101.3 493.5C102.7 490.4 103.2 487.0 103.7 483.4C104.2 479.8 104.4 473.9 104.6 472.0L104.6 472.0L104.7 210.0L104.7 210.0C104.4 208.3 104.6 203.8 103.0 200.0C101.4 196.2 98.4 191.0 95.0 187.0C91.6 183.0 87.7 178.7 82.5 176.0C77.3 173.3 67.1 171.8 64.0 171.0Z" fill="none" stroke="#000" stroke-width="1.4" stroke-linejoin="miter"/><path d="M148.5 516.0C153.4 515.1 169.3 513.1 178.0 510.7C186.7 508.3 193.7 505.3 200.4 501.8C207.1 498.3 212.7 494.9 218.3 489.5C223.9 484.1 229.9 476.1 234.0 469.4C238.1 462.6 240.6 456.8 243.0 449.0C245.4 441.2 247.2 430.6 248.5 422.4C249.8 414.2 250.0 408.4 250.5 400.0C251.0 391.6 251.1 388.7 251.3 372.0C251.5 355.3 252.0 315.6 251.9 300.0C251.8 284.4 251.4 285.9 250.7 278.6C249.9 271.3 249.1 263.5 247.4 256.0C245.7 248.5 243.7 241.2 240.7 233.8C237.7 226.4 233.6 217.8 229.5 211.5C225.4 205.2 221.6 200.9 216.0 195.8C210.4 190.7 203.1 184.9 196.0 181.0C188.9 177.1 181.5 174.0 173.6 172.3C165.7 170.6 152.7 171.0 148.5 170.7L148.5 170.7L148.5 516.0Z" fill="none" stroke="#000" stroke-width="1.4" stroke-linejoin="miter"/><path d="M299.0 182.5L424.0 206.0L424.0 206.0C420.8 206.7 410.5 207.7 405.0 210.0C399.5 212.3 394.3 216.2 391.0 220.0C387.7 223.8 386.2 228.8 385.0 233.0C383.8 237.2 384.0 243.0 383.8 245.0L383.8 245.0L383.8 500.0L383.8 500.0C384.2 502.3 384.6 509.5 386.0 514.0C387.4 518.5 388.7 522.2 392.0 527.0C395.3 531.8 400.8 538.9 406.0 543.0C411.2 547.1 420.5 550.2 423.4 551.6L423.4 551.6L299.0 529.5L299.0 529.5C301.8 529.1 310.7 528.9 316.0 527.0C321.3 525.1 327.3 521.7 331.0 518.0C334.7 514.3 336.5 510.0 338.0 505.0C339.5 500.0 339.7 490.8 340.0 488.0L340.0 488.0L340.0 228.0L340.0 228.0C339.7 225.7 339.5 218.5 338.0 214.0C336.5 209.5 334.2 204.8 331.0 201.0C327.8 197.2 324.3 194.6 319.0 191.5C313.7 188.4 302.3 184.0 299.0 182.5Z" fill="none" stroke="#000" stroke-width="1.4" stroke-linejoin="miter"/><path d="M450.0 212.0C456.7 214.0 476.7 219.8 490.0 224.0C503.3 228.2 511.7 230.8 530.0 237.0C548.3 243.2 577.6 252.8 600.0 261.0C622.4 269.2 653.8 281.8 664.5 286.0L664.5 286.0L664.5 363.5L664.5 363.5L659.5 362.5L659.5 362.5C659.1 358.4 659.2 347.0 657.0 338.0C654.8 329.0 651.3 317.9 646.0 308.4C640.7 298.9 632.7 288.6 625.0 281.0C617.3 273.4 610.0 267.7 600.0 262.5C590.0 257.3 576.6 254.0 565.0 250.0C553.4 246.0 536.1 240.4 530.3 238.5L530.3 238.5L530.3 417.0L530.3 417.0C534.2 417.0 547.2 417.6 554.0 417.0C560.8 416.4 565.8 416.0 571.0 413.6C576.2 411.2 581.5 406.6 585.0 402.5C588.5 398.4 590.4 391.6 591.8 388.8C593.2 386.1 593.2 386.5 593.5 386.0L593.5 386.0L597.8 387.0L597.8 387.0L597.8 488.8L597.8 488.8L593.5 488.0L593.5 488.0C592.6 486.0 591.0 481.2 588.4 476.0C585.8 470.8 582.3 462.7 578.0 457.0C573.7 451.3 568.1 446.1 562.7 441.8C557.3 437.6 551.0 434.1 545.6 431.5C540.2 428.9 532.8 427.2 530.3 426.4L530.3 426.4L530.3 581.0L530.3 581.9C535.2 583.6 550.9 588.8 560.0 592.0C569.1 595.2 578.9 599.0 585.0 601.0C591.1 603.0 591.8 603.8 596.8 604.0C601.8 604.2 609.1 604.2 615.2 602.0C621.4 599.8 628.5 595.3 633.7 591.0C638.9 586.7 642.9 582.1 646.6 576.3C650.3 570.5 653.7 563.7 655.8 556.0C657.9 548.3 658.5 534.6 659.0 530.3L659.0 530.3L663.4 531.3L663.4 531.3L663.4 632.6L663.4 632.6C658.2 630.2 642.2 623.0 632.0 618.5C621.8 614.0 614.0 610.3 602.0 605.9C590.0 601.5 572.0 596.2 560.0 592.2C548.0 588.2 541.7 585.6 530.0 582.0C518.3 578.4 503.9 574.6 490.0 570.6C476.1 566.6 454.1 560.3 446.9 558.2L446.9 558.2C449.8 557.7 458.8 556.7 464.0 555.0C469.2 553.3 474.5 551.2 478.0 548.0C481.5 544.8 483.8 540.7 485.2 536.0C486.6 531.3 486.4 522.7 486.6 520.0L486.6 520.0L486.6 252.0L486.6 252.0C486.3 250.0 486.4 243.8 485.0 240.0C483.6 236.2 481.2 232.4 478.0 229.0C474.8 225.6 470.7 222.3 466.0 219.5C461.3 216.7 452.7 213.2 450.0 212.0Z" fill="none" stroke="#000" stroke-width="1.4" stroke-linejoin="miter"/><path d="M-3.0 472.0C-2.5 473.2 -1.5 475.7 0.0 479.0C1.5 482.3 3.4 487.9 5.8 492.0C8.2 496.1 11.1 500.3 14.5 503.7C17.9 507.1 21.4 510.1 26.0 512.4C30.6 514.7 39.3 516.6 42.0 517.4L42.0 517.4L-3.0 520.5" fill="none" stroke="#000" stroke-width="1.4" stroke-linejoin="miter"/><path d="M81.0 172.8C82.9 174.0 88.9 176.3 92.5 180.0C96.1 183.7 100.0 190.0 102.5 195.0C105.0 200.0 106.5 205.0 107.5 210.0C108.5 215.0 108.5 222.5 108.7 225.0L108.7 225.0L108.7 470.0L108.7 470.0C108.5 473.0 108.6 483.0 107.5 488.0C106.4 493.0 104.6 496.5 102.0 500.0C99.4 503.5 95.5 506.6 92.0 509.0C88.5 511.4 82.8 513.6 81.0 514.5" fill="none" stroke="#1a1a1a" stroke-width="0.9"/><path d="M325.5 191.7C327.1 193.1 332.5 196.6 335.0 200.0C337.5 203.4 339.1 207.3 340.5 212.0C341.9 216.7 342.9 222.5 343.5 228.0C344.1 233.5 343.9 242.2 344.0 245.0L344.0 245.0L344.0 470.0L344.0 470.0C343.9 473.0 344.0 482.7 343.5 488.0C343.0 493.3 342.2 497.8 341.0 502.0C339.8 506.2 338.2 509.8 336.0 513.0C333.8 516.2 331.0 518.8 328.0 521.0C325.0 523.2 319.7 525.2 318.0 526.0" fill="none" stroke="#1a1a1a" stroke-width="0.9"/><path d="M474.0 224.0C475.4 225.4 480.1 229.0 482.5 232.5C484.9 236.0 487.3 240.1 488.7 245.0C490.1 249.9 490.4 259.2 490.7 262.0L490.7 262.0L490.7 505.0L490.7 505.0C490.6 507.8 490.7 516.8 490.0 522.0C489.3 527.2 488.2 532.0 486.5 536.0C484.8 540.0 482.8 543.2 480.0 546.0C477.2 548.8 473.3 551.3 470.0 553.0C466.7 554.7 461.7 555.5 460.0 556.0" fill="none" stroke="#1a1a1a" stroke-width="0.9"/><path d="M106.7 212V484M342 230V488M488.6 256V520" fill="none" stroke="#222" stroke-width="3.6" stroke-dasharray="0.8 2.2"/><g clip-path="url(#cDbowl)"><path d="M148.5 516.0C153.4 515.1 169.3 513.1 178.0 510.7C186.7 508.3 193.7 505.3 200.4 501.8C207.1 498.3 212.7 494.9 218.3 489.5C223.9 484.1 229.9 476.1 234.0 469.4C238.1 462.6 240.6 456.8 243.0 449.0C245.4 441.2 247.2 430.6 248.5 422.4C249.8 414.2 250.0 408.4 250.5 400.0C251.0 391.6 251.1 388.7 251.3 372.0C251.5 355.3 252.0 315.6 251.9 300.0C251.8 284.4 251.4 285.9 250.7 278.6C249.9 271.3 249.1 263.5 247.4 256.0C245.7 248.5 243.7 241.2 240.7 233.8C237.7 226.4 233.6 217.8 229.5 211.5C225.4 205.2 221.6 200.9 216.0 195.8C210.4 190.7 203.1 184.9 196.0 181.0C188.9 177.1 181.5 174.0 173.6 172.3C165.7 170.6 152.7 171.0 148.5 170.7" transform="translate(2.6,0)" fill="none" stroke="#1a1a1a" stroke-width="0.9"/><path d="M148.5 516.0C153.4 515.1 169.3 513.1 178.0 510.7C186.7 508.3 193.7 505.3 200.4 501.8C207.1 498.3 212.7 494.9 218.3 489.5C223.9 484.1 229.9 476.1 234.0 469.4C238.1 462.6 240.6 456.8 243.0 449.0C245.4 441.2 247.2 430.6 248.5 422.4C249.8 414.2 250.0 408.4 250.5 400.0C251.0 391.6 251.1 388.7 251.3 372.0C251.5 355.3 252.0 315.6 251.9 300.0C251.8 284.4 251.4 285.9 250.7 278.6C249.9 271.3 249.1 263.5 247.4 256.0C245.7 248.5 243.7 241.2 240.7 233.8C237.7 226.4 233.6 217.8 229.5 211.5C225.4 205.2 221.6 200.9 216.0 195.8C210.4 190.7 203.1 184.9 196.0 181.0C188.9 177.1 181.5 174.0 173.6 172.3C165.7 170.6 152.7 171.0 148.5 170.7" transform="translate(1.3,0)" fill="none" stroke="#222" stroke-width="2.4" stroke-dasharray="0.8 2.2"/></g><path d="M669.2 343V369.5" stroke="#000" stroke-width="1.6"/><circle cx="176.0" cy="88.0" r="72.8" fill="none" stroke="#1a1a1a" stroke-width="0.9"/><circle cx="176.0" cy="87.0" r="66.2" fill="none" stroke="#1a1a1a" stroke-width="0.9"/><circle cx="175.5" cy="80.0" r="41.4" fill="none" stroke="#1a1a1a" stroke-width="0.9"/><circle cx="175.5" cy="80.4" r="34.6" fill="none" stroke="#1a1a1a" stroke-width="0.9"/><ellipse cx="331" cy="130" rx="45.2" ry="45.5" fill="none" stroke="#1a1a1a" stroke-width="0.9"/><ellipse cx="331" cy="130.5" rx="38" ry="39" fill="none" stroke="#1a1a1a" stroke-width="0.9"/><circle cx="-27.0" cy="94.0" r="66.5" fill="none" stroke="#1a1a1a" stroke-width="0.9"/><circle cx="-27.0" cy="94.0" r="57.3" fill="none" stroke="#1a1a1a" stroke-width="0.9"/><circle cx="-14.0" cy="88.0" r="20.0" fill="none" stroke="#1a1a1a" stroke-width="0.9"/><path d="M400.0 100.0C405.0 103.8 418.3 112.1 430.0 122.5C441.7 132.9 457.5 149.8 470.0 162.5C482.5 175.2 495.0 189.1 505.0 198.5C515.0 207.9 525.8 215.8 530.0 219.2" fill="none" stroke="#1a1a1a" stroke-width="0.9"/><path d="M404.0 100.0C408.7 103.5 420.7 110.8 432.0 121.0C443.3 131.2 459.5 148.4 472.0 161.0C484.5 173.6 497.3 187.3 507.0 196.5C516.7 205.7 526.2 212.9 530.0 216.2" fill="none" stroke="#1a1a1a" stroke-width="0.9"/><path d="M538.3 186.6C539.2 184.6 540.9 177.9 543.8 174.8C546.7 171.7 551.6 169.2 555.6 167.9C559.6 166.6 563.2 166.1 567.5 166.9C571.8 167.7 577.4 170.2 581.3 172.8C585.2 175.4 588.6 179.4 591.1 182.7C593.6 186.0 594.9 189.7 596.0 192.5C597.1 195.3 597.8 196.3 597.5 199.4C597.2 202.5 595.3 207.4 594.1 211.3C592.9 215.2 592.0 220.2 590.2 223.1C588.4 226.0 586.1 227.2 583.3 229.0C580.5 230.8 577.0 233.0 573.4 234.0C569.8 235.0 565.9 235.5 561.6 235.0C557.3 234.5 552.1 232.8 547.8 231.0C543.5 229.2 538.9 226.1 535.9 224.1C532.9 222.1 531.0 220.0 530.0 219.2" fill="none" stroke="#1a1a1a" stroke-width="0.9"/><path d="M538.3 186.6C539.5 185.1 542.9 180.0 545.8 177.8C548.7 175.6 552.3 174.2 555.6 173.4C558.9 172.6 561.9 172.1 565.5 172.8C569.1 173.5 574.0 175.3 577.3 177.8C580.6 180.3 583.4 184.0 585.2 187.6C587.0 191.2 588.0 195.4 588.2 199.4C588.4 203.4 588.0 207.4 586.2 211.3C584.4 215.2 580.8 220.3 577.3 223.1C573.8 225.9 570.1 227.2 565.5 228.0C560.9 228.8 554.3 229.0 549.7 228.0C545.1 227.0 541.2 224.1 537.9 222.1C534.6 220.1 531.3 217.2 530.0 216.2" fill="none" stroke="#1a1a1a" stroke-width="0.9"/><path d="M597.5 199.4C598.4 198.6 600.1 196.5 603.0 194.5C605.9 192.5 610.5 189.2 614.8 187.6C619.1 186.0 624.0 185.2 628.6 185.2C633.2 185.2 638.1 185.9 642.4 187.6C646.7 189.3 651.2 192.5 654.3 195.5C657.4 198.5 659.6 202.2 661.2 205.4C662.8 208.6 663.3 213.2 663.7 214.8" fill="none" stroke="#1a1a1a" stroke-width="0.9"/><path d="M663.7 214.8C662.8 212.7 660.8 205.8 658.2 202.4C655.6 199.0 651.9 196.5 648.3 194.5C644.7 192.5 640.8 191.1 636.5 190.6C632.2 190.1 627.3 190.4 622.7 191.6C618.1 192.8 612.7 194.6 608.9 197.5C605.1 200.4 601.9 205.7 600.0 209.3C598.1 212.9 597.5 215.6 597.5 219.2C597.5 222.8 598.1 226.7 600.0 231.0C601.9 235.3 604.8 239.9 608.9 244.8C613.0 249.7 618.8 255.7 624.7 260.6C630.6 265.5 637.2 270.6 644.4 274.4C651.6 278.2 658.7 279.7 668.0 283.3C677.3 286.9 689.7 291.6 700.0 296.0C710.3 300.4 720.0 305.2 730.0 310.0C740.0 314.8 755.0 322.5 760.0 325.0" fill="none" stroke="#1a1a1a" stroke-width="0.9"/><path d="M590.2 223.1C590.7 224.8 591.3 229.4 593.1 233.0C594.9 236.6 597.4 240.9 601.0 244.8C604.6 248.7 609.5 252.7 614.8 256.6C620.1 260.6 626.4 264.9 632.6 268.5C638.9 272.1 645.1 275.4 652.3 278.3C659.5 281.2 670.1 284.2 676.0 286.2C681.9 288.1 680.2 286.9 687.5 290.0C694.8 293.1 707.9 299.2 720.0 305.0C732.1 310.8 753.3 321.7 760.0 325.0" fill="none" stroke="#1a1a1a" stroke-width="0.9"/><path d="M405.0 100.0C408.3 101.3 417.5 106.2 425.0 108.0C432.5 109.8 443.3 111.0 450.0 111.0C456.7 111.0 460.8 109.8 465.0 108.0C469.2 106.2 473.3 101.3 475.0 100.0" fill="none" stroke="#1a1a1a" stroke-width="0.9"/><path d="M412.0 100.0C415.0 101.7 423.3 107.7 430.0 110.0C436.7 112.3 444.5 114.3 452.0 114.0C459.5 113.7 469.3 110.3 475.0 108.0C480.7 105.7 484.2 101.3 486.0 100.0" fill="none" stroke="#1a1a1a" stroke-width="0.9"/><path d="M425.0 119.0C428.3 120.2 439.2 124.6 445.0 126.0C450.8 127.4 454.7 127.8 460.0 127.5C465.3 127.2 472.0 125.7 477.0 124.0C482.0 122.3 485.7 120.2 490.0 117.5C494.3 114.8 499.5 110.9 503.0 108.0C506.5 105.1 509.7 101.3 511.0 100.0" fill="none" stroke="#1a1a1a" stroke-width="0.9"/><path d="M668.7 314.0C669.2 312.9 670.2 309.1 671.8 307.6C673.4 306.1 675.1 305.1 678.4 305.0C681.7 304.9 685.9 305.1 691.6 306.8C697.3 308.6 704.7 312.1 712.6 315.5C720.5 318.9 732.4 323.5 739.0 327.4C745.6 331.3 748.5 335.4 752.0 339.0C755.5 342.6 758.7 347.3 760.0 349.0" fill="none" stroke="#1a1a1a" stroke-width="0.9"/><path d="M691.6 403.7C693.3 404.6 698.8 408.5 702.0 409.0C705.2 409.5 708.6 407.8 711.0 406.5C713.4 405.2 715.2 403.7 716.6 401.0C718.0 398.3 719.9 394.0 719.2 390.5C718.5 387.0 715.5 382.4 712.6 380.0C709.7 377.6 705.9 375.8 702.0 376.0C698.1 376.2 692.2 378.5 689.0 381.3C685.8 384.1 684.1 388.6 683.0 393.0C681.9 397.4 682.1 403.2 682.4 408.0C682.7 412.8 683.1 416.2 685.0 422.0C686.9 427.8 689.4 436.4 694.0 443.0C698.6 449.6 706.0 457.0 712.6 461.6C719.2 466.2 725.8 468.8 733.7 470.8C741.6 472.8 755.6 473.0 760.0 473.4" fill="none" stroke="#1a1a1a" stroke-width="0.9"/><path d="M691.6 403.7C692.2 406.8 693.3 416.3 695.5 422.0C697.7 427.7 700.5 432.9 704.7 438.0C708.9 443.1 714.8 448.9 720.5 452.4C726.2 455.9 732.4 457.9 739.0 459.0C745.6 460.1 756.5 459.0 760.0 459.0" fill="none" stroke="#1a1a1a" stroke-width="0.9"/><path d="M760.0 531.3C757.3 534.1 748.4 542.0 744.0 548.4C739.6 554.8 736.2 562.1 733.7 569.5C731.2 576.9 729.5 585.6 729.0 593.0C728.5 600.4 729.3 607.0 731.0 614.0C732.7 621.0 735.9 629.3 739.0 635.0C742.1 640.7 746.0 645.1 749.5 648.4C753.0 651.7 758.2 653.9 760.0 655.0" fill="none" stroke="#1a1a1a" stroke-width="0.9"/><path d="M760.0 560.0C757.8 562.5 750.0 568.7 746.8 574.7C743.6 580.7 741.6 588.8 741.0 595.8C740.4 602.8 741.4 610.3 743.0 616.8C744.6 623.3 748.0 630.2 750.8 635.0C753.6 639.8 758.5 644.0 760.0 645.8" fill="none" stroke="#1a1a1a" stroke-width="0.9"/><path d="M668.7 602.4C669.2 603.9 669.3 607.4 671.8 611.6C674.3 615.8 678.2 621.3 683.7 627.4C689.2 633.5 697.2 642.3 704.7 648.4C712.2 654.5 719.2 659.2 728.4 664.0C737.6 668.8 754.7 675.2 760.0 677.4" fill="none" stroke="#1a1a1a" stroke-width="0.9"/><path d="M599.0 644.5L681.0 678.7" fill="none" stroke="#1a1a1a" stroke-width="0.9"/><path d="M668.5 639.7C675.9 643.6 699.6 656.5 712.6 663.0C725.6 669.5 741.1 676.1 746.8 678.7" fill="none" stroke="#1a1a1a" stroke-width="0.9"/><path d="M0.0 559.0C6.7 558.6 26.8 557.0 40.0 556.5C53.2 556.0 64.0 555.9 79.0 555.8C94.0 555.7 111.5 555.6 130.0 556.0C148.5 556.4 166.8 556.5 190.0 558.0C213.2 559.5 247.1 562.4 269.0 564.7C290.9 567.0 303.1 568.8 321.6 571.6C340.1 574.4 360.3 577.6 380.0 581.3C399.7 585.0 420.7 589.3 440.0 594.0C459.3 598.7 486.5 606.9 495.8 609.5" fill="none" stroke="#1a1a1a" stroke-width="0.9"/><path d="M441.3 561.3C445.6 562.4 459.3 565.8 467.4 568.0C475.5 570.2 482.3 572.4 490.0 574.7C497.7 577.0 505.8 579.2 513.7 581.8C521.6 584.4 530.8 587.7 537.4 590.5C544.0 593.3 547.9 595.2 553.2 598.4C558.5 601.6 564.8 605.8 569.0 609.5C573.2 613.2 576.0 616.5 578.5 620.5C581.0 624.5 582.9 629.0 584.0 633.2C585.1 637.4 585.7 641.3 585.3 645.8C584.9 650.3 583.8 655.5 581.6 660.0C579.4 664.5 575.5 669.5 572.1 672.7C568.7 675.9 564.9 677.8 561.0 679.3C557.1 680.8 552.9 681.5 549.0 681.5C545.1 681.5 540.9 680.2 537.4 679.3C533.9 678.3 531.3 677.9 527.9 675.8C524.5 673.6 520.2 670.3 516.9 666.4C513.6 662.5 510.0 656.6 508.2 652.1C506.4 647.6 505.8 643.4 505.8 639.5C505.8 635.6 506.4 632.2 508.2 628.5C510.0 624.8 513.4 620.2 516.9 617.4C520.4 614.5 527.4 612.4 529.5 611.4" fill="none" stroke="#1a1a1a" stroke-width="0.9"/><path d="M427.0 557.6C429.5 558.2 435.3 559.4 442.0 561.5C448.7 563.6 459.4 567.1 467.4 570.0C475.4 572.9 482.3 575.8 490.0 578.7C497.7 581.6 505.8 584.2 513.7 587.4C521.6 590.5 530.8 594.5 537.4 597.6C544.0 600.8 548.7 603.3 553.2 606.3C557.7 609.3 561.1 612.4 564.2 615.8C567.3 619.2 570.1 623.2 572.0 626.9C573.9 630.6 575.0 634.0 575.3 638.0C575.6 642.0 575.0 646.7 573.7 650.6C572.4 654.5 570.3 658.6 567.4 661.6C564.5 664.6 560.9 667.3 556.4 668.7C551.9 670.1 545.5 670.4 540.5 669.8C535.5 669.1 530.5 667.5 526.3 664.8C522.1 662.1 517.9 657.9 515.3 653.7C512.7 649.5 510.9 644.2 510.5 639.5C510.1 634.8 511.4 629.2 513.0 625.3C514.6 621.3 517.2 618.1 520.0 615.8C522.8 613.5 527.9 612.1 529.5 611.4" fill="none" stroke="#1a1a1a" stroke-width="0.9"/><rect x="0" y="100" width="760" height="0.6" fill="#383838"/></svg><!-- status bar -->
<div class="a" style="left:0;top:680px;width:760px;height:22px;background:#525252"></div><div class="a" style="left:0;top:680px;width:760px;height:1px;background:#3c3c3c"></div>
<div class="t" style="left:-3.500px;top:686px;font-size:10.500px;color:#d6d6d6;transform:scaleX(0.920);transform-origin:0 0">ejar.</div>
<div class="a" style="left:0;top:701.5px;width:760px;height:15px;background:#515151"></div>
<div class="a" style="left:24px;top:701.5px;width:1px;height:15px;background:#464646"></div>
<svg class="a" style="left:7px;top:704px" width="10" height="10" viewBox="0 0 10 10"><path d="M1 1L6 5L1 9Z" fill="#7a7a7a"/><rect x="7" y="1" width="1.500" height="8" fill="#7a7a7a"/></svg>
<div class="t" style="left:100px;top:705.5px;font-size:10px;color:#e0e0e0">Zoom</div>
<div class="a" style="left:198px;top:701.5px;width:1px;height:15px;background:#464646"></div>
<svg class="a" style="left:203px;top:704px" width="10" height="10" viewBox="0 0 10 10"><path d="M2 1L7.500 5L2 9Z" fill="#d8d8d8"/></svg>
<div class="a" style="left:214px;top:701.5px;width:546px;height:15px;background:#484848"></div>
<svg class="a" style="left:218px;top:704px" width="10" height="10" viewBox="0 0 10 10"><path d="M6 1.500L2.500 5L6 8.500" fill="none" stroke="#c8c8c8" stroke-width="1.200"/></svg>
<div class="a" style="left:688px;top:702.5px;width:22px;height:12px;background:#686868;border-radius:6px"></div>
<div class="a" style="left:0;top:716px;width:760px;height:1.600px;background:#333"></div>
<!-- taskbar -->
<div class="a" style="left:0;top:717.5px;width:760px;height:42.5px;background:linear-gradient(90deg,#2a1a1e 0%,#33191f 30%,#3d1b28 60%,#431d2e 100%)"></div>
<!-- windows -->
<svg class="a" style="left:99px;top:729px" width="21" height="21" viewBox="0 0 21 21"><defs><linearGradient id="wg" x1="0" y1="0" x2="0" y2="1"><stop offset="0" stop-color="#5fd0fb"/><stop offset="1" stop-color="#1f9de6"/></linearGradient></defs><g fill="url(#wg)"><rect x="0" y="0" width="9.700" height="9.700" rx="1"/><rect x="10.800" y="0" width="9.700" height="9.700" rx="1"/><rect x="0" y="10.800" width="9.700" height="9.700" rx="1"/><rect x="10.800" y="10.800" width="9.700" height="9.700" rx="1"/></g></svg>
<!-- search -->
<svg class="a" style="left:138px;top:728px" width="22" height="22" viewBox="0 0 22 22"><defs><linearGradient id="sg" x1="0" y1="1" x2="1" y2="0"><stop offset="0" stop-color="#1b7fe0"/><stop offset="0.600" stop-color="#2aa0f0"/><stop offset="1" stop-color="#5fe0a0"/></linearGradient></defs><circle cx="9.500" cy="9.500" r="7.300" fill="#3a3340" stroke="url(#sg)" stroke-width="2.600"/><path d="M15 15L20 20" stroke="#1b7fe0" stroke-width="2.800" stroke-linecap="round"/></svg>
<!-- task view -->
<svg class="a" style="left:176px;top:728px" width="24" height="22" viewBox="0 0 24 22"><rect x="1" y="6.500" width="15" height="14" rx="2" fill="#6a6a6e"/><rect x="7" y="1" width="16" height="14" rx="2" fill="#f2f2f2"/><rect x="7" y="6.500" width="9" height="8.500" fill="#bdbdc0"/></svg>
<!-- snipping -->
<svg class="a" style="left:214px;top:727px" width="25" height="24" viewBox="0 0 25 24"><rect x="2" y="1" width="16.500" height="16.500" rx="2.500" fill="#f4f4f4"/><g fill="#d83030"><rect x="4.500" y="3.600" width="2" height="2"/><rect x="7.800" y="3.600" width="2" height="2"/><rect x="11.100" y="3.600" width="2" height="2"/><rect x="4.500" y="6.900" width="2" height="2"/><rect x="4.500" y="10.200" width="2" height="2"/></g><path d="M7.500 14.300H14.800V7.500" fill="none" stroke="#a0a6ae" stroke-width="1.600"/><path d="M20.300 11.800L12.500 15.200M14.800 18.600L16.300 11.500" stroke="#2a9df0" stroke-width="1.400"/><circle cx="21.800" cy="11" r="1.700" fill="none" stroke="#2a9df0" stroke-width="1.400"/><circle cx="14" cy="20.300" r="1.700" fill="none" stroke="#2a9df0" stroke-width="1.400"/></svg>
<div class="a" style="left:220px;top:753px;width:12px;height:2.500px;border-radius:2px;background:#9a9a9e"></div>
<!-- copilot -->
<svg class="a" style="left:253px;top:727px" width="24" height="24" viewBox="0 0 24 24"><defs><linearGradient id="cg1" x1="0" y1="0" x2="1" y2="1"><stop offset="0" stop-color="#30b8f0"/><stop offset="0.450" stop-color="#6f6cf2"/><stop offset="1" stop-color="#e650a8"/></linearGradient><linearGradient id="cg2" x1="0" y1="0" x2="0.300" y2="1"><stop offset="0" stop-color="#3fd08a"/><stop offset="0.500" stop-color="#f2c63c"/><stop offset="1" stop-color="#f0603c"/></linearGradient></defs><path d="M8 3H16Q19 3 20 6L22.500 13Q23.500 17.500 19.500 18H14Q12 18 11.300 16L8.500 6Q8.200 4 8 3Z" fill="url(#cg1)"/><path d="M2 10Q1 6.500 4.500 6H10Q12 6 12.600 8L15 17Q15.600 19.500 16.300 21H8Q5 21 4 17.500Z" fill="url(#cg2)"/><path d="M9.800 8.500H13.600L15.600 15.500H11.800Z" fill="#3c1a30"/></svg>
<!-- explorer -->
<svg class="a" style="left:292px;top:729px" width="23" height="21" viewBox="0 0 23 21"><path d="M1 2.500Q1 1 2.500 1H8L10.500 3.500H20.500Q22 3.500 22 5V7H1Z" fill="#e8a520"/><rect x="1" y="5" width="21" height="14.500" rx="1.500" fill="#fbd14b"/><rect x="6" y="13" width="11" height="6.500" rx="1" fill="#2f8fe0"/><rect x="8" y="15" width="7" height="1.600" fill="#9fd0ff"/></svg>
<div class="a" style="left:301px;top:753px;width:6px;height:3px;border-radius:2px;background:#9a9a9e"></div>
<!-- netflix -->
<div class="t" style="left:337px;top:729px;font-size:20.500px;font-weight:bold;color:#e0121e;transform:scaleX(0.720);transform-origin:left top">N</div>
<!-- spotify -->
<svg class="a" style="left:370px;top:728px" width="22" height="22" viewBox="0 0 22 22"><circle cx="11" cy="11" r="10.500" fill="#1ed760"/><g fill="none" stroke="#0a1a10" stroke-linecap="round"><path d="M5 8Q11 6 17.500 9" stroke-width="2.200"/><path d="M5.500 11.700Q11 10 16.500 12.500" stroke-width="1.900"/><path d="M6.200 15Q11 13.700 15.300 15.800" stroke-width="1.600"/></g></svg>
<!-- chrome -->
<svg class="a" style="left:409px;top:728px" width="22" height="22" viewBox="0 0 22 22"><circle cx="11" cy="11" r="10.500" fill="#e33b2e"/><path d="M11 11L1.900 5.750A10.500 10.500 0 0 0 5.750 20.100Z" fill="#1fa24a"/><path d="M11 11L5.750 20.100A10.500 10.500 0 0 0 20.100 5.750L11 5.750Z" fill="#fbc116"/><path d="M11 11L1.900 5.750A10.500 10.500 0 0 1 20.100 5.750L11 5.750Z" fill="#e33b2e"/><circle cx="11" cy="11" r="5" fill="#fff"/><circle cx="11" cy="11" r="3.900" fill="#3b7ded"/></svg>
<div class="a" style="left:417px;top:753px;width:6px;height:3px;border-radius:2px;background:#9a9a9e"></div>
<!-- Ps -->
<div class="a" style="left:449px;top:729px;width:20px;height:19px;border-radius:3px;background:#0a2744"></div>
<div class="t" style="left:451.500px;top:732.500px;font-size:12.200px;font-weight:bold;color:#31a8ff">Ps</div>
<!-- Ai (active) -->
<div class="a" style="left:480px;top:721px;width:35px;height:37px;border-radius:4px;background:#4a2a36;border:1px solid #5a3a46;box-sizing:border-box"></div>
<div class="a" style="left:487px;top:729px;width:20px;height:19px;border-radius:3px;background:#330000"></div>
<div class="t" style="left:490.500px;top:732.500px;font-size:12.200px;font-weight:bold;color:#ff9a00">Ai</div>
<div class="a" style="left:492px;top:753px;width:10px;height:3px;border-radius:2px;background:#9fd8b0"></div>
<!-- Ae -->
<div class="a" style="left:526px;top:729px;width:20px;height:19px;border-radius:3px;background:#00005b"></div>
<div class="t" style="left:528.500px;top:732.500px;font-size:12.200px;font-weight:bold;color:#9999ff">Ae</div>
<!-- Me -->
<div class="a" style="left:564px;top:729px;width:20px;height:19px;border-radius:3px;background:#00005b"></div>
<div class="t" style="left:565.500px;top:732.500px;font-size:12.200px;font-weight:bold;color:#9999ff">Me</div>
<!-- Id -->
<div class="a" style="left:603px;top:729px;width:20px;height:19px;border-radius:3px;background:#49021f"></div>
<div class="t" style="left:607.500px;top:732.500px;font-size:12.200px;font-weight:bold;color:#ff3366">Id</div>
<!-- chrome w/ avatar -->
<svg class="a" style="left:641px;top:724px" width="28" height="26" viewBox="0 0 28 26"><g transform="translate(0,4)"><circle cx="11" cy="11" r="10.500" fill="#e33b2e"/><path d="M11 11L1.900 5.750A10.500 10.500 0 0 0 5.750 20.100Z" fill="#1fa24a"/><path d="M11 11L5.750 20.100A10.500 10.500 0 0 0 20.100 5.750L11 5.750Z" fill="#fbc116"/><path d="M11 11L1.900 5.750A10.500 10.500 0 0 1 20.100 5.750L11 5.750Z" fill="#e33b2e"/><circle cx="11" cy="11" r="5" fill="#fff"/><circle cx="11" cy="11" r="3.900" fill="#3b7ded"/></g><circle cx="19.300" cy="6.800" r="7" fill="#3a1a2a"/><circle cx="19.300" cy="6.800" r="6.300" fill="#ecd070"/><path d="M13.500 10Q17 6 23 11Q21 15 17 14Z" fill="#3f8a7a"/><path d="M14 11L22 7" stroke="#5a4030" stroke-width="1.500"/></svg>
<div class="a" style="left:649px;top:753px;width:6px;height:3px;border-radius:2px;background:#9a9a9e"></div>
</body></html>
